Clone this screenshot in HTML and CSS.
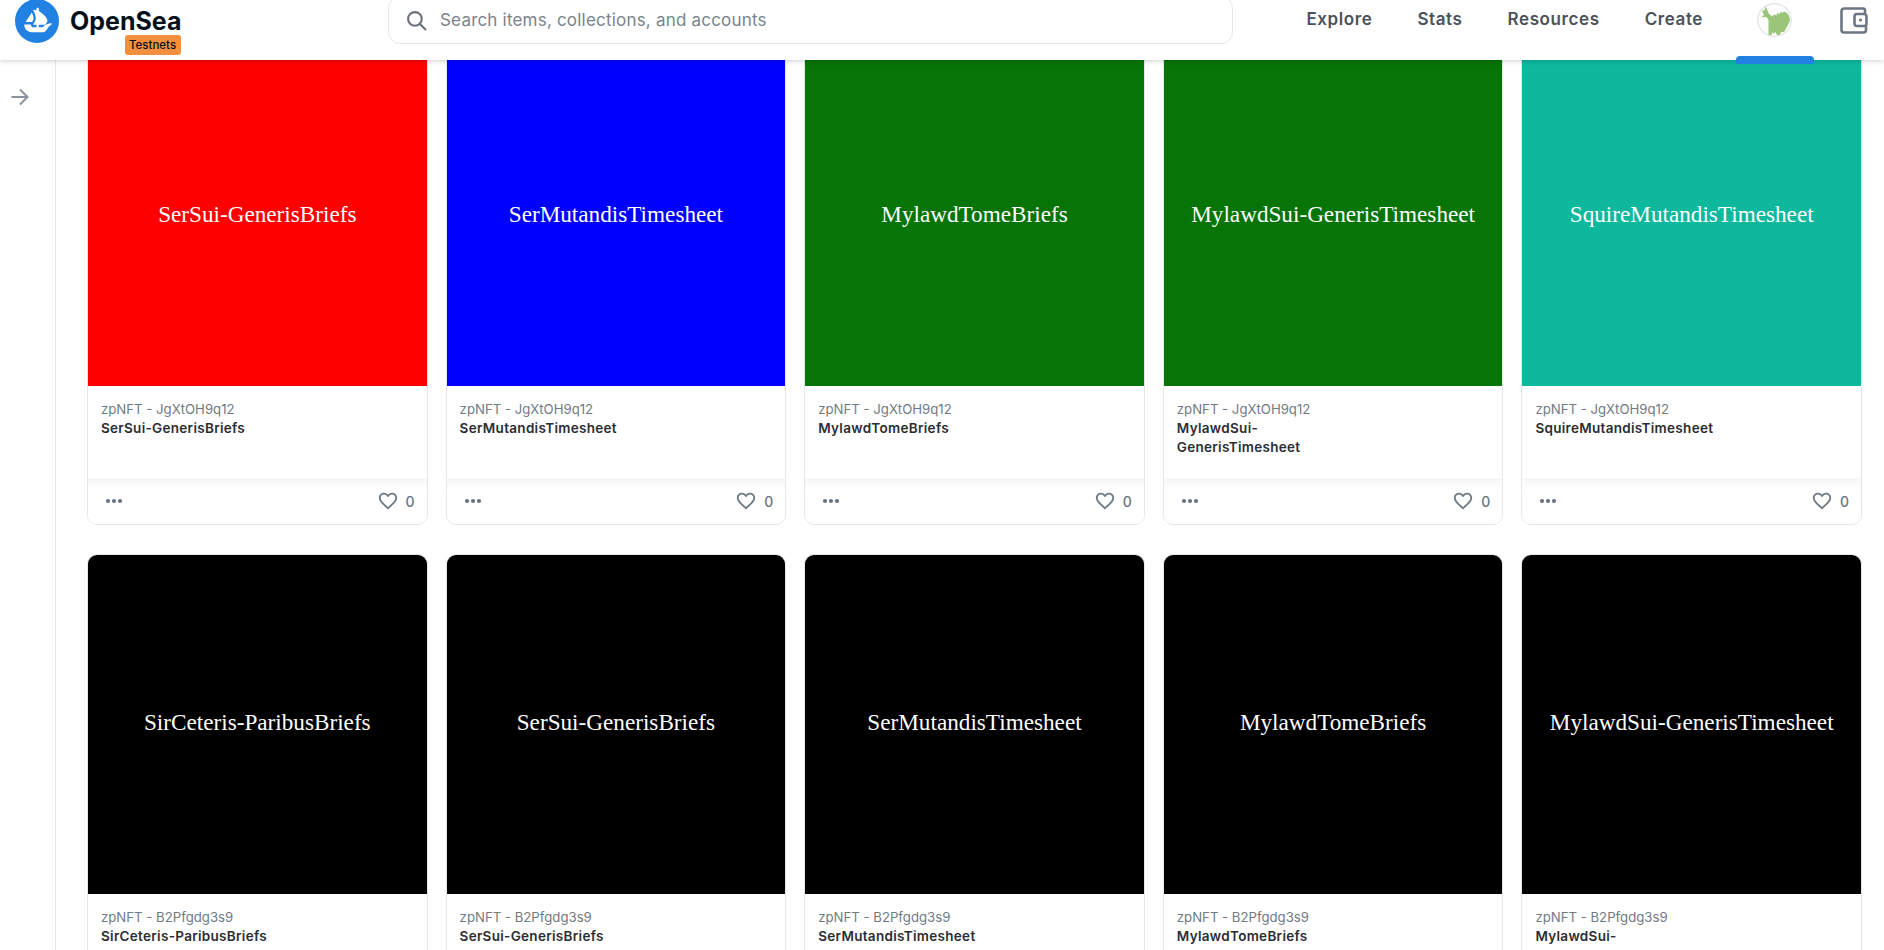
FILE: index.html
```html
<!DOCTYPE html>
<html lang="en">
<head>
    <meta charset="UTF-8">
    <title>OpenSea Testnets</title>
    <link rel="stylesheet" href="styles.css">
</head>
<body>

<svg class="icon-defs" aria-hidden="true">
    <symbol id="heart" viewBox="0 0 24 24">
        <path d="M16.5 3c-1.74 0-3.41.81-4.5 2.09C10.91 3.81 9.24 3 7.5 3 4.42 3 2 5.42 2 8.5c0 3.78 3.4 6.86 8.55 11.54L12 21.35l1.45-1.32C18.6 15.36 22 12.28 22 8.5 22 5.42 19.58 3 16.5 3zm-4.4 15.55l-.1.1-.1-.1C7.14 14.24 4 11.39 4 8.5 4 6.5 5.5 5 7.5 5c1.54 0 3.04.99 3.57 2.36h1.87C13.46 5.99 14.96 5 16.5 5c2 0 3.5 1.5 3.5 3.5 0 2.89-3.14 5.74-7.9 10.05z"/>
    </symbol>
    <symbol id="dots" viewBox="0 0 18 6">
        <circle cx="3" cy="3" r="2.1"/>
        <circle cx="9" cy="3" r="2.1"/>
        <circle cx="15" cy="3" r="2.1"/>
    </symbol>
</svg>

<header class="topbar">
    <a class="logo">
        <svg class="logo-mark" viewBox="0 0 90 90">
            <circle cx="45" cy="45" r="45" fill="#2081e2"/>
            <path fill="#fff" d="M22.2 46.51l.2-.3L34.1 27.89c.17-.27.57-.24.7.05 1.96 4.39 3.65 9.84 2.86 13.23-.34 1.4-1.26 3.29-2.3 5.04-.14.25-.29.5-.44.74-.08.11-.2.18-.33.18H22.54c-.32 0-.51-.35-.34-.62z"/>
            <path fill="#fff" d="M37 21.6L43.82 23.4V20.44C43.82 19 44.95 17.9 46.34 17.9C47.72 17.9 48.85 19 48.85 20.44V24.77C56 29.5 66.4 38 66.4 45C66.4 48 63.5 50.5 60.5 52.67H48.85V57.73H55.3C56.7 57.73 57.3 57.2 58.1 56.3C59.5 54.7 61.5 52.7 63.5 52.2L73.8 49.3C74.1 49.2 74.38 49.5 74.38 49.9V52.8C74.38 53 74.28 53.13 74.13 53.19C73.22 53.58 70.12 55 68.83 56.8C65.54 61.38 63.03 67.93 57.4 67.93H33.92C25.6 67.93 18.87 61.17 18.87 52.83V52.56C18.87 52.34 19.05 52.16 19.27 52.16H32.36C32.62 52.16 32.81 52.4 32.79 52.65C32.69 53.5 32.85 54.37 33.26 55.16C34.03 56.74 35.64 57.73 37.38 57.73H43.86V52.67H37.45C37.12 52.67 36.93 52.29 37.12 52.02C38 50.7 39.7 48 41.3 44.7C42.5 42 42.46 39.3 42.4 38C42.2 34 40.5 28.7 37.7 23.4L36.97 21.94C36.86 21.75 37.04 21.51 37.26 21.57Z"/>
        </svg>
        <span class="logo-text">OpenSea</span>
        <span class="logo-badge">Testnets</span>
    </a>

    <div class="search">
        <svg class="search-icon" viewBox="0 0 20 20">
            <circle cx="8.5" cy="8.5" r="6.5"/>
            <line x1="13.3" y1="13.3" x2="19" y2="19"/>
        </svg>
        <span class="search-text">Search items, collections, and accounts</span>
    </div>

    <nav class="nav">
        <a class="nav-link">Explore</a>
        <a class="nav-link">Stats</a>
        <a class="nav-link">Resources</a>
        <a class="nav-link">Create</a>
        <span class="account">
            <svg class="avatar" viewBox="0 0 35 34">
                <ellipse cx="17.5" cy="17" rx="16.7" ry="16.2" fill="#fff" stroke="#e2e5e9" stroke-width="1.4"/>
                <path fill="#9bc67a" d="M5 8L7 12L4 14.5L9.5 14L11.5 17V32H14.5L15.5 29L17 31L18.5 29L20 32H23L24 29H27C30 24 33 19 33 16C32 11 29 9 27 8.5L25.5 10L24 8.5L22.5 11L20.5 10L19.5 12.5L17 11.5L15.5 13.5L12 11C11 9 10 6 8.5 3.5L7.5 7Z"/>
            </svg>
            <span class="account-bar"></span>
        </span>
        <svg class="wallet" viewBox="0 0 28 27">
            <path d="M25 6V3.5C25 2.4 24.1 1.5 23 1.5H4C2.6 1.5 1.5 2.6 1.5 4V23C1.5 24.4 2.6 25.5 4 25.5H23.5C24.9 25.5 26 24.4 26 23V19"/>
            <rect x="14.5" y="7" width="12" height="12" rx="2.5"/>
            <circle class="wallet-dot" cx="20.5" cy="13" r="1.6"/>
        </svg>
    </nav>
</header>

<div class="layout">
    <aside class="sidebar">
        <svg class="sidebar-arrow" viewBox="0 0 18 18">
            <path d="M0.5 9H16.5M9 1.5L16.5 9L9 16.5"/>
        </svg>
    </aside>

    <main class="grid">
        <article class="card">
            <div class="thumb thumb-red"><span>SerSui-GenerisBriefs</span></div>
            <div class="info">
                <div class="collection">zpNFT - JgXtOH9q12</div>
                <div class="name">SerSui-GenerisBriefs</div>
            </div>
            <div class="card-foot">
                <svg class="dots"><use href="#dots"/></svg>
                <span class="likes"><svg class="heart"><use href="#heart"/></svg>0</span>
            </div>
        </article>
        <article class="card">
            <div class="thumb thumb-blue"><span>SerMutandisTimesheet</span></div>
            <div class="info">
                <div class="collection">zpNFT - JgXtOH9q12</div>
                <div class="name">SerMutandisTimesheet</div>
            </div>
            <div class="card-foot">
                <svg class="dots"><use href="#dots"/></svg>
                <span class="likes"><svg class="heart"><use href="#heart"/></svg>0</span>
            </div>
        </article>
        <article class="card">
            <div class="thumb thumb-green"><span>MylawdTomeBriefs</span></div>
            <div class="info">
                <div class="collection">zpNFT - JgXtOH9q12</div>
                <div class="name">MylawdTomeBriefs</div>
            </div>
            <div class="card-foot">
                <svg class="dots"><use href="#dots"/></svg>
                <span class="likes"><svg class="heart"><use href="#heart"/></svg>0</span>
            </div>
        </article>
        <article class="card">
            <div class="thumb thumb-green"><span>MylawdSui-GenerisTimesheet</span></div>
            <div class="info">
                <div class="collection">zpNFT - JgXtOH9q12</div>
                <div class="name">MylawdSui-GenerisTimesheet</div>
            </div>
            <div class="card-foot">
                <svg class="dots"><use href="#dots"/></svg>
                <span class="likes"><svg class="heart"><use href="#heart"/></svg>0</span>
            </div>
        </article>
        <article class="card">
            <div class="thumb thumb-teal"><span>SquireMutandisTimesheet</span></div>
            <div class="info">
                <div class="collection">zpNFT - JgXtOH9q12</div>
                <div class="name">SquireMutandisTimesheet</div>
            </div>
            <div class="card-foot">
                <svg class="dots"><use href="#dots"/></svg>
                <span class="likes"><svg class="heart"><use href="#heart"/></svg>0</span>
            </div>
        </article>

        <article class="card">
            <div class="thumb thumb-black"><span>SirCeteris-ParibusBriefs</span></div>
            <div class="info">
                <div class="collection">zpNFT - B2Pfgdg3s9</div>
                <div class="name">SirCeteris-ParibusBriefs</div>
            </div>
        </article>
        <article class="card">
            <div class="thumb thumb-black"><span>SerSui-GenerisBriefs</span></div>
            <div class="info">
                <div class="collection">zpNFT - B2Pfgdg3s9</div>
                <div class="name">SerSui-GenerisBriefs</div>
            </div>
        </article>
        <article class="card">
            <div class="thumb thumb-black"><span>SerMutandisTimesheet</span></div>
            <div class="info">
                <div class="collection">zpNFT - B2Pfgdg3s9</div>
                <div class="name">SerMutandisTimesheet</div>
            </div>
        </article>
        <article class="card">
            <div class="thumb thumb-black"><span>MylawdTomeBriefs</span></div>
            <div class="info">
                <div class="collection">zpNFT - B2Pfgdg3s9</div>
                <div class="name">MylawdTomeBriefs</div>
            </div>
        </article>
        <article class="card">
            <div class="thumb thumb-black"><span>MylawdSui-GenerisTimesheet</span></div>
            <div class="info">
                <div class="collection">zpNFT - B2Pfgdg3s9</div>
                <div class="name">MylawdSui-</div>
            </div>
        </article>
    </main>
</div>

</body>
</html>
```

FILE: styles.css
```css
body {
    margin: 0;
    height: 100vh;
    overflow: hidden;
    background: #fff;
    font-family: Inter, "Open Sans", sans-serif;
    color: #04111d;
}
.icon-defs {
    display: none;
}

/* top bar */
.topbar {
    position: relative;
    z-index: 2;
    box-sizing: border-box;
    height: 60px;
    padding: 0 16px 20px 15px;
    display: flex;
    align-items: center;
    background: #fff;
    box-shadow: 0 1px 5px rgba(4, 17, 29, 0.2);
}
.logo {
    display: grid;
    grid-template-columns: 44px auto;
    column-gap: 11px;
    width: 164px;
    height: 40px;
    flex: none;
}
.logo-mark {
    width: 44px;
    height: 44px;
    margin-top: -1px;
    grid-row: 1 / 3;
}
.logo-text {
    font-size: 25px;
    font-weight: 700;
    line-height: 30px;
    margin-top: 6px;
}
.logo-badge {
    justify-self: end;
    box-sizing: border-box;
    width: 56px;
    height: 20px;
    margin-top: -1px;
    margin-right: 1px;
    background: #f2903f;
    border-radius: 3px;
    font-size: 11.5px;
    font-weight: 500;
    line-height: 20px;
    text-align: center;
}
.search {
    box-sizing: border-box;
    width: 845px;
    height: 48px;
    margin-left: 209px;
    padding-left: 17px;
    flex: none;
    display: flex;
    align-items: center;
    border: 1px solid #e5e8eb;
    border-radius: 12px;
}
.search-icon {
    width: 21px;
    height: 21px;
    flex: none;
    fill: none;
    stroke: #6c7278;
    stroke-width: 2;
}
.search-text {
    margin-left: 13px;
    font-size: 17px;
    letter-spacing: 0.2px;
    color: #7a838c;
}
.nav {
    margin-left: auto;
    display: flex;
    align-items: center;
}
.nav-link {
    margin-right: 45px;
    margin-top: -2px;
    font-size: 17px;
    font-weight: 600;
    letter-spacing: 0.6px;
    color: #4c5259;
}
.account {
    position: relative;
    margin-left: 9px;
    margin-right: 48px;
    display: flex;
}
.avatar {
    width: 35px;
    height: 36px;
}
.account-bar {
    position: absolute;
    left: -21px;
    top: 54px;
    width: 78px;
    height: 8px;
    background: #2081e2;
    border-radius: 4px 4px 0 0;
}
.wallet {
    width: 28px;
    height: 27px;
    fill: #fff;
    stroke: #6d7782;
    stroke-width: 2.6;
}
.wallet-dot {
    fill: #6d7782;
    stroke: none;
}

/* sidebar + cards */
.layout {
    display: flex;
}
.sidebar {
    box-sizing: border-box;
    width: 56px;
    height: 890px;
    flex: none;
    padding: 28px 0 0 11px;
    border-right: 1px solid #e5e8eb;
}
.sidebar-arrow {
    display: block;
    width: 18px;
    height: 18px;
    fill: none;
    stroke: #8a939b;
    stroke-width: 2;
}
.grid {
    flex: 1;
    min-width: 0;
    margin-top: -14px;
    padding: 0 22px 0 31px;
    display: grid;
    grid-template-columns: repeat(5, 1fr);
    column-gap: 18px;
    row-gap: 29px;
    align-content: start;
}
.card {
    height: 479px;
    box-sizing: border-box;
    display: flex;
    flex-direction: column;
    border: 1px solid #e5e8eb;
    border-radius: 10px;
    overflow: hidden;
    background: #fff;
}
.thumb {
    height: 339px;
    flex: none;
    box-sizing: border-box;
    padding-bottom: 5px;
    display: flex;
    align-items: center;
    justify-content: center;
    font-family: "Liberation Serif", serif;
    font-size: 23.2px;
    color: #fff;
}
.thumb-red {
    background: #ff0000;
}
.thumb-blue {
    background: #0000ff;
}
.thumb-green {
    background: #067406;
}
.thumb-teal {
    background: #0eb89d;
}
.thumb-black {
    background: #000;
}
.info {
    flex: 1;
    padding: 14px 12px 0 13px;
}
.collection {
    font-size: 13.2px;
    line-height: 19px;
    color: #707a83;
}
.name {
    max-width: 195px;
    font-size: 13.5px;
    font-weight: 600;
    letter-spacing: 0.3px;
    line-height: 19px;
    color: #2b2d33;
}
.card-foot {
    height: 46px;
    flex: none;
    box-sizing: border-box;
    padding: 0 12px 0 17px;
    display: flex;
    align-items: center;
    justify-content: space-between;
    background: linear-gradient(#f5f6f8, #fff 12px);
}
.dots {
    width: 18px;
    height: 6px;
    fill: #6a7480;
}
.likes {
    display: flex;
    align-items: center;
    font-size: 14px;
    font-weight: 500;
    color: #6a7480;
}
.heart {
    width: 22px;
    height: 22px;
    margin-right: 7px;
    fill: #707a83;
}
```
